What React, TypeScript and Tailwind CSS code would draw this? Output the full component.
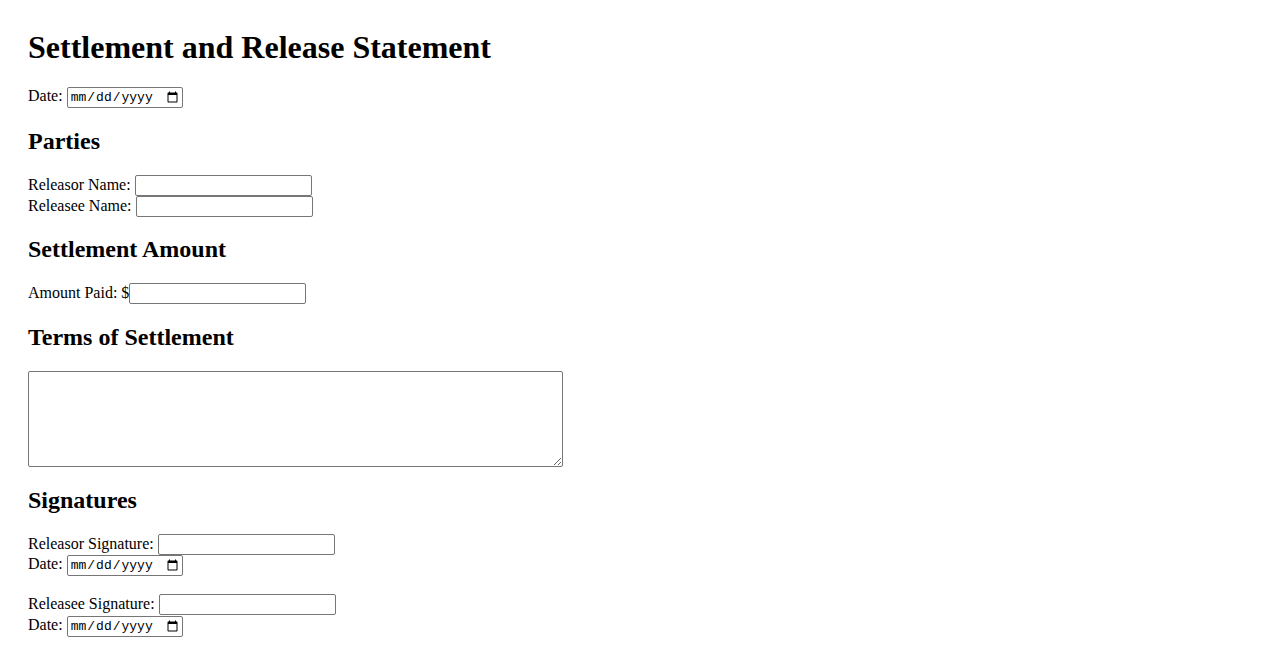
import React from "react";

const textInput =
  "inline-block align-baseline w-[177px] h-[21px] border border-[#767676] rounded-[2px] px-[2px] py-[1px] bg-white text-[13.33px] font-['Liberation_Sans',Arial,sans-serif] text-black";
const dateInput =
  "inline-block align-baseline w-[116px] h-[21px] border border-[#767676] rounded-[2px] pl-[2px] pr-[1px] py-[1px] bg-white text-[13px] font-['Liberation_Mono',monospace] text-black";

export default function App() {
  return (
    <div className="min-h-[650px] bg-white text-black font-['Liberation_Serif','Times_New_Roman',serif] text-[16px] leading-[normal] pt-[29px] px-[28px]">
      <h1 className="text-[32px] font-bold leading-[normal] mb-[21.44px]">
        Settlement and Release Statement
      </h1>
      <div>
        Date: <input type="date" className={dateInput} />
      </div>

      <h2 className="text-[24px] font-bold leading-[normal] my-[19.92px]">Parties</h2>
      <div>
        Releasor Name: <input type="text" className={textInput} />
      </div>
      <div>
        Releasee Name: <input type="text" className={textInput} />
      </div>

      <h2 className="text-[24px] font-bold leading-[normal] mt-[18.92px] mb-[19.92px]">Settlement Amount</h2>
      <div>
        Amount Paid: $<input type="text" className={textInput} />
      </div>

      <h2 className="text-[24px] font-bold leading-[normal] my-[19.92px]">Terms of Settlement</h2>
      <textarea className="block w-[535px] h-[96px] border border-[#767676] rounded-[2px] p-[2px] bg-white text-[13px] font-['Liberation_Mono',monospace]" />

      <h2 className="text-[24px] font-bold leading-[normal] my-[19.92px]">Signatures</h2>
      <div>
        <div className="h-[21.33px]">
          Releasor Signature: <input type="text" className={textInput} />
        </div>
        <div className="h-[21.33px]">
          Date: <input type="date" className={dateInput} />
        </div>
      </div>
      <div className="mt-[18px]">
        <div className="h-[21.33px]">
          Releasee Signature: <input type="text" className={textInput} />
        </div>
        <div className="h-[21.33px]">
          Date: <input type="date" className={dateInput} />
        </div>
      </div>
    </div>
  );
}
